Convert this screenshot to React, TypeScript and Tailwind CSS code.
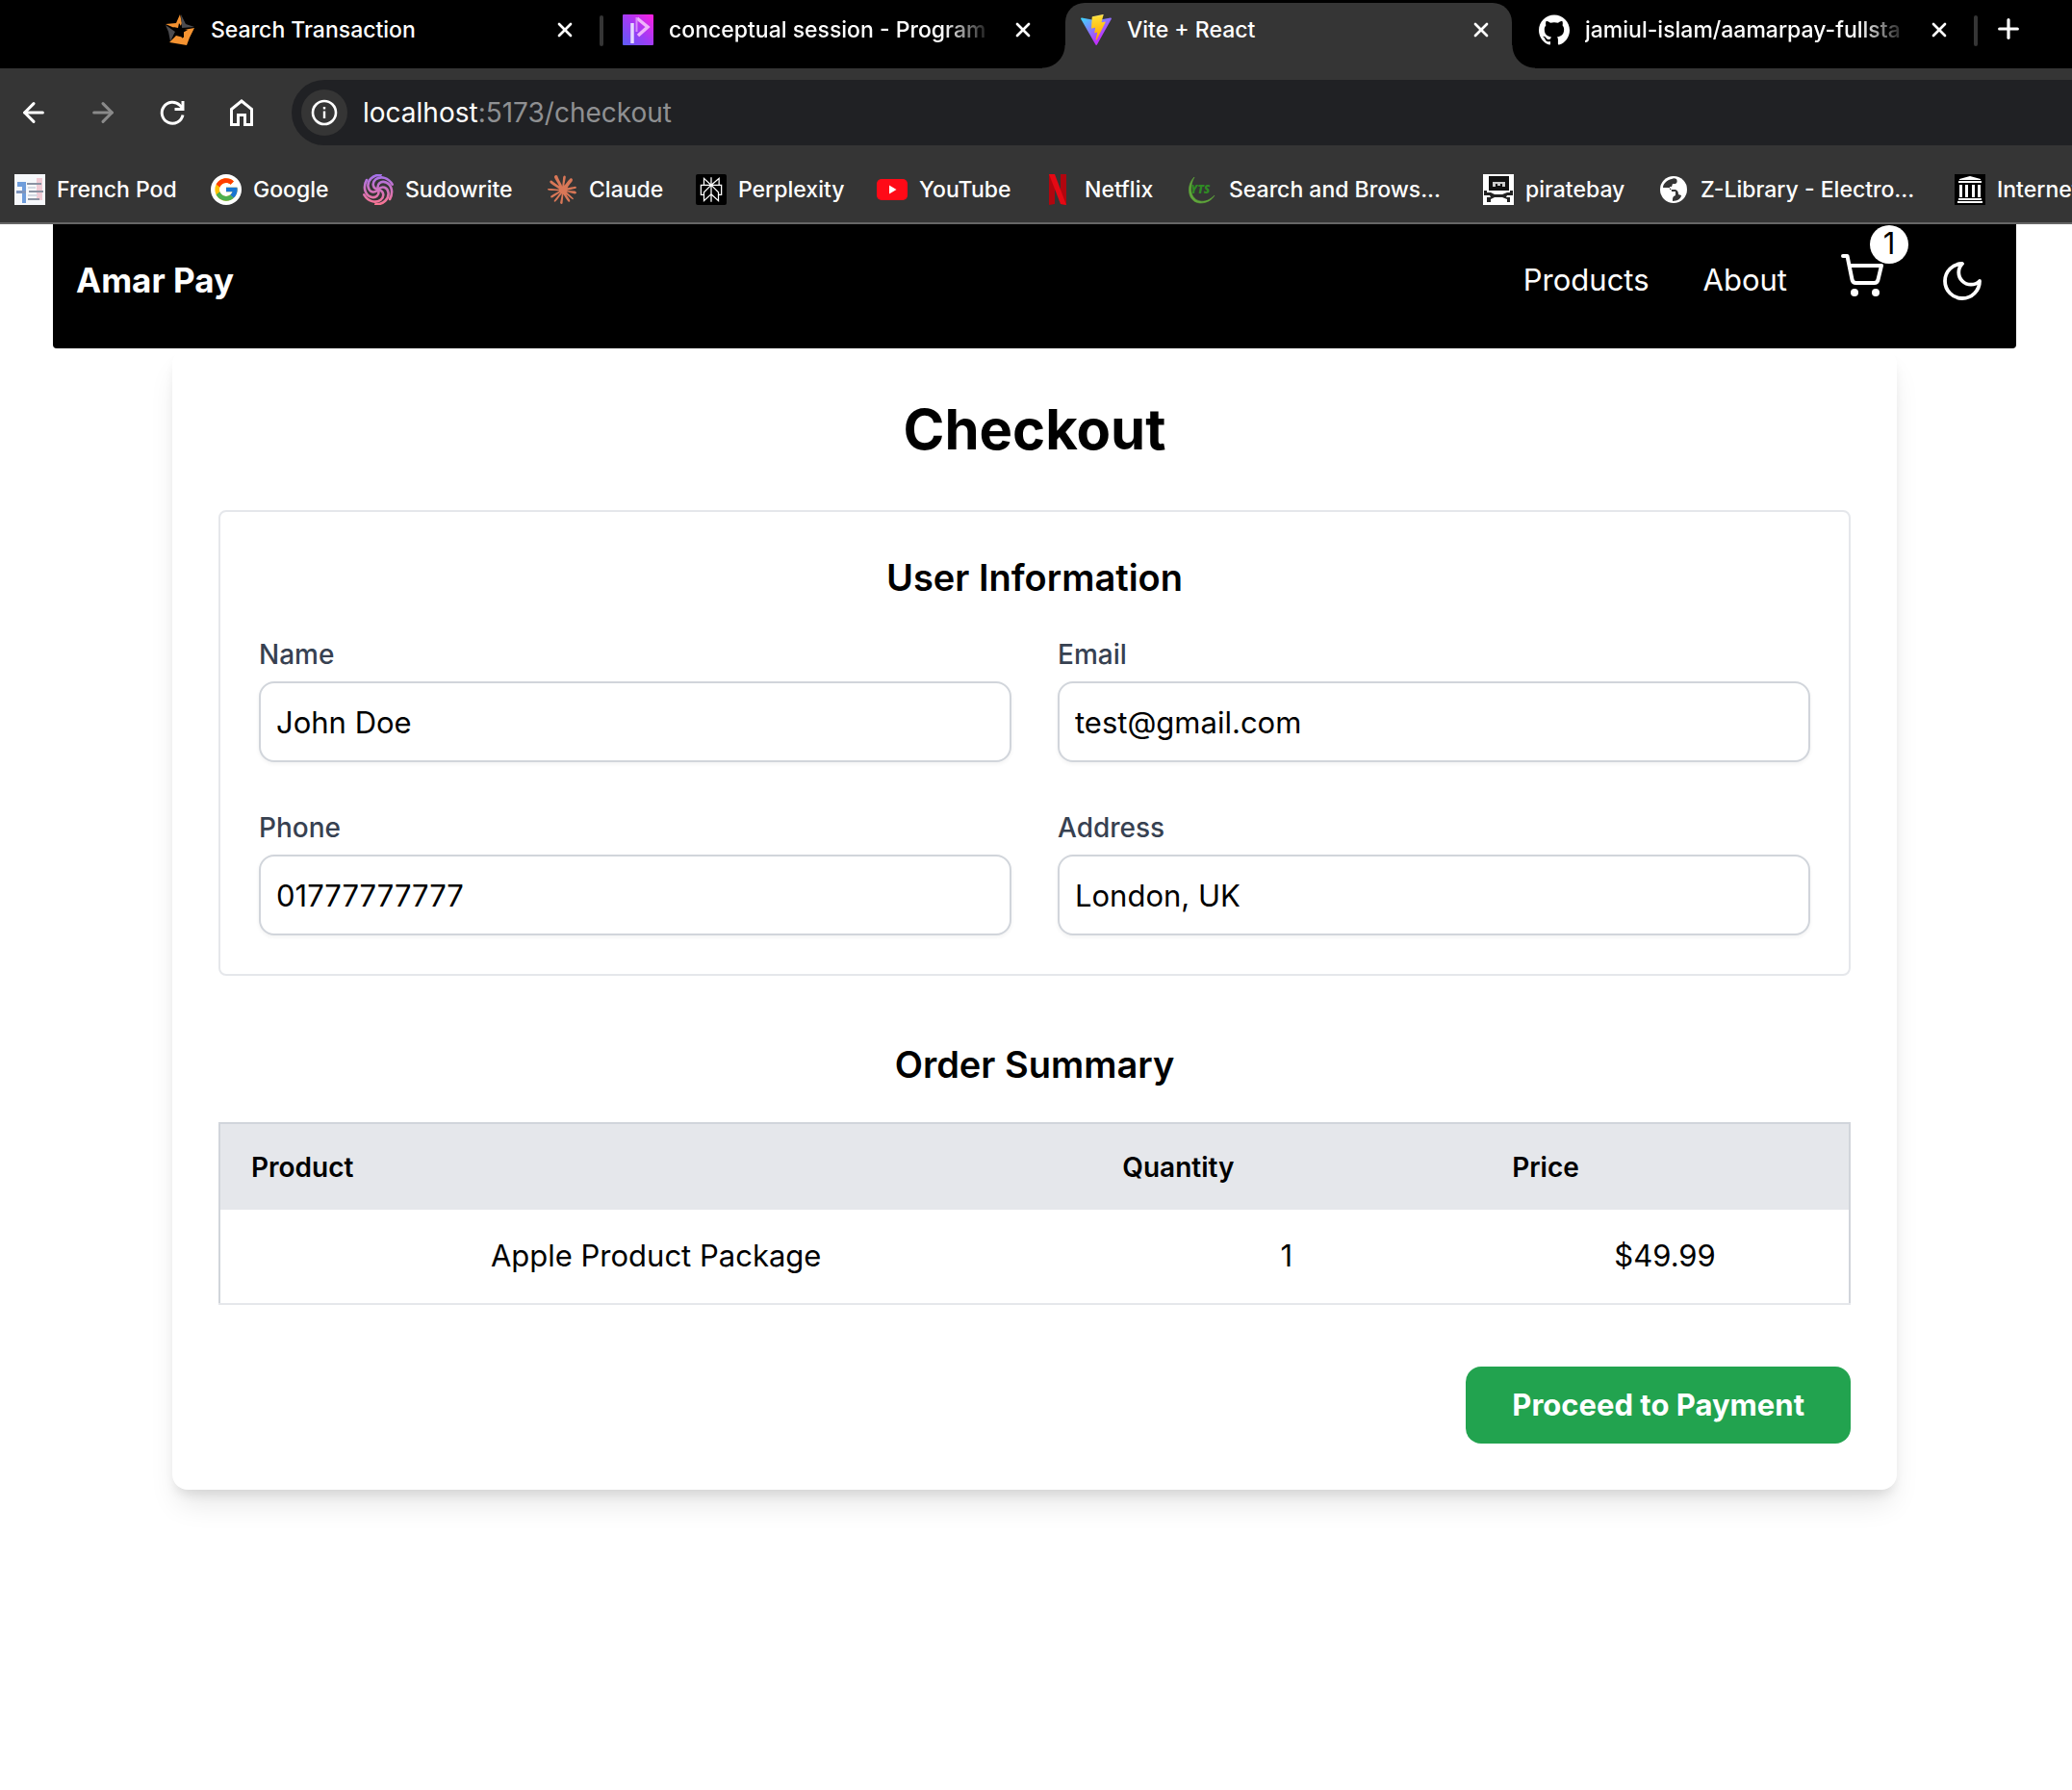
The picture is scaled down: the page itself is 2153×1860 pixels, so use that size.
import React, { useState } from "react";
import { SiPerplexity, SiGithub, SiClaude } from "react-icons/si";
import { FcGoogle } from "react-icons/fc";
import { ArrowLeft, ArrowRight, X, Plus } from "lucide-react";

type IconProps = { className?: string };

function StarIcon() {
  return (
    <svg viewBox="0 0 32 32" className="size-8">
      <path d="M16 0 L18 9 L15 16 L1 10 L12 9Z" fill="#f59331" />
      <path d="M17 0 L22 10 L31 13 L18 14Z" fill="#4b4b4f" />
      <path d="M1 11 L11 18 L6 28 L4 18Z" fill="#4b4b4f" />
      <path d="M31 14 L26 24 L23 32 L5 29 L12 22 L20 24 L20 16Z" fill="#f59331" />
      <path d="M15 9 L19 15 L24 16 L19 19 L19 25 L15 20 L9 22 L12 17 L9 13 L14 14Z" fill="#000" />
    </svg>
  );
}

function ProgrammingIcon() {
  return (
    <svg viewBox="0 0 32 32" className="size-8">
      <defs>
        <linearGradient id="ph" x1="0" y1="1" x2="1" y2="0">
          <stop offset="0" stopColor="#5b5bf8" />
          <stop offset="0.5" stopColor="#a23bf5" />
          <stop offset="1" stopColor="#ff1fe0" />
        </linearGradient>
      </defs>
      <rect width="32" height="32" rx="1" fill="url(#ph)" />
      <path d="M10 9V30" stroke="#e6d8ff" strokeWidth="3.500" />
      <path d="M15 4 L26 13 L16 22" fill="none" stroke="#efb3fb" strokeWidth="3.500" />
      <path d="M14.500 3V18" stroke="#d58cf8" strokeWidth="2" />
    </svg>
  );
}

function ViteIcon() {
  return (
    <svg viewBox="0 0 256 257" className="size-8">
      <defs>
        <linearGradient id="va" x1="-.828%" x2="57.636%" y1="7.652%" y2="78.411%">
          <stop offset="0%" stopColor="#41D1FF" />
          <stop offset="100%" stopColor="#BD34FE" />
        </linearGradient>
        <linearGradient id="vb" x1="43.376%" x2="50.316%" y1="2.242%" y2="89.03%">
          <stop offset="0%" stopColor="#FFEA83" />
          <stop offset="8.333%" stopColor="#FFDD35" />
          <stop offset="100%" stopColor="#FFA800" />
        </linearGradient>
      </defs>
      <path fill="url(#va)" d="M255.153 37.938L134.897 252.976c-2.483 4.44-8.862 4.466-11.382.048L.875 37.958c-2.746-4.814 1.371-10.646 6.827-9.67l120.385 21.517a6.537 6.537 0 0 0 2.322-.004l117.867-21.483c5.438-.991 9.574 4.796 6.877 9.62Z" />
      <path fill="url(#vb)" d="M185.432.063L96.44 17.501a3.268 3.268 0 0 0-2.634 3.014l-5.474 92.456a3.268 3.268 0 0 0 3.997 3.378l24.777-5.718c2.318-.535 4.413 1.507 3.936 3.838l-7.361 36.047c-.495 2.426 1.782 4.5 4.151 3.78l15.304-4.649c2.372-.72 4.652 1.36 4.15 3.788l-11.698 56.621c-.732 3.542 3.979 5.473 5.943 2.437l1.313-2.028l72.516-144.72c1.215-2.423-.88-5.186-3.54-4.672l-25.505 4.922c-2.396.462-4.435-1.77-3.759-4.114l16.646-57.705c.677-2.35-1.37-4.583-3.769-4.113Z" />
    </svg>
  );
}

function FrenchPodIcon() {
  return (
    <svg viewBox="0 0 32 32" className="size-8">
      <rect width="32" height="32" fill="#f6f8fb" />
      <path d="M3 8H12V30H8V13H3Z" fill="#6f9ddb" />
      <path d="M23 4H29V27H23Z" fill="#f0cbd5" />
      <path d="M2 17H12V20H2Z" fill="#7d95bd" />
      <path d="M13 9H28V11H13ZM15 17H30V19H15ZM14 25H26V27H14Z" fill="#8b93a3" />
      <path d="M14 13H22V15H14ZM14 21H24V23H14Z" fill="#d5dae3" />
    </svg>
  );
}

function GoogleIcon() {
  return (
    <span className="flex size-8 items-center justify-center rounded-full bg-white">
      <FcGoogle className="size-7" />
    </span>
  );
}

const swirlAngles = [0, 60, 120, 180, 240, 300];

function SudowriteIcon() {
  return (
    <svg viewBox="0 0 32 32" className="size-8">
      <defs>
        <linearGradient id="sw" x1="0" y1="0" x2="0" y2="1">
          <stop offset="0" stopColor="#a271ee" />
          <stop offset="1" stopColor="#fb7590" />
        </linearGradient>
        <mask id="swirl">
          <g fill="none" stroke="#fff" strokeWidth="2.600" strokeLinecap="round">
            {swirlAngles.map((a) => (
              <path key={a} d="M4 6C0 13 2 21 8 23.500C13 25.500 18 22 16 16" transform={`rotate(${a} 16 16)`} />
            ))}
          </g>
        </mask>
      </defs>
      <rect width="32" height="32" fill="url(#sw)" mask="url(#swirl)" />
    </svg>
  );
}

function ClaudeIcon() {
  return <SiClaude className="size-[30px] text-[#d97757]" />;
}

function PerplexityIcon() {
  return (
    <span className="flex size-8 items-center justify-center rounded-xs bg-black">
      <SiPerplexity className="size-[26px] text-white" />
    </span>
  );
}

function YouTubeIcon() {
  return (
    <svg viewBox="0 0 32 32" className="size-8">
      <rect y="5" width="32" height="22" rx="5" fill="#ff0a17" />
      <path d="M13 11.500V20.500L20.500 16Z" fill="#fff" />
    </svg>
  );
}

function NetflixIcon() {
  return (
    <svg viewBox="0 0 32 32" className="size-8">
      <path d="M7 0H13V31L7 32ZM19 0H25V32L19 31Z" fill="#b1060f" />
      <path d="M7 0H13L25 32L19 31Z" fill="#e50914" />
    </svg>
  );
}

function YtsIcon() {
  return (
    <svg viewBox="0 0 32 32" className="size-8">
      <path d="M8 3C-1 12 1 29 14 30C21 30 26 27 29 22C24 27 19 29 14 28C4 26 2 14 8 3Z" fill="#5fa83a" stroke="#5fa83a" strokeWidth="0.600" />
      <text x="4" y="20" fontSize="12" fontWeight="800" fontStyle="italic" fontFamily="Open Sans, sans-serif" fill="#2f8a24">YTS</text>
    </svg>
  );
}

function PirateIcon() {
  return (
    <svg viewBox="0 0 32 32" className="size-8">
      <rect width="32" height="32" fill="#fff" />
      <path d="M6 2H27V17H6Z" fill="#111" />
      <path d="M1 17H4V19H8L12 21H20L25 19H28V17H31V22H25L24 24H28V29H25V26L20 24H12L8 26V29H4V24H8L7 22H1Z" fill="#222" />
      <path d="M10 8H23V10H10ZM10 10H13V13H10ZM15 10H18V12H15ZM20 10H23V13H20Z" fill="#ccc" />
    </svg>
  );
}

function GlobeIcon() {
  return (
    <svg viewBox="0 0 32 32" className="size-8">
      <circle cx="16" cy="16" r="14" fill="#fff" />
      <path d="M14 5C9 6 5 10 5 14H10C13 14 14 16 14 18H18V22C15 23 15 25 15 28C20 28 24 25 24 22L21 21C21 18 20 17 18 16H12V13H14L15 10H18C20 9 20 7 19 5C17 4 16 4 14 5Z" fill="#353535" />
    </svg>
  );
}

function ArchiveIcon() {
  return (
    <svg viewBox="0 0 32 32" className="size-8">
      <rect width="32" height="32" fill="#000" />
      <path d="M16 2L27 5V6H5V5ZM4 7H28V9H4ZM5 11H8V24H5ZM11 11H14V24H11ZM18 11H21V24H18ZM24 11H27V24H24ZM4 25H28V27H4ZM3 28H29V30H3Z" fill="#fff" />
    </svg>
  );
}

function ReloadIcon({ className }: IconProps) {
  return (
    <svg viewBox="0 0 32 32" className={className} fill="none" stroke="currentColor" strokeWidth="3">
      <path d="M27 18.500A11 11 0 1 1 24 8.500L27 11.500" />
      <path d="M27 4V12.500H18.500" />
    </svg>
  );
}

function HomeIcon({ className }: IconProps) {
  return (
    <svg viewBox="0 0 32 32" className={className} fill="none" stroke="currentColor" strokeWidth="3">
      <path d="M5.500 28.500V12.500L16 4L26.500 12.500V28.500H19.500V18.500H12.500V28.500Z" />
    </svg>
  );
}

function InfoIcon({ className }: IconProps) {
  return (
    <svg viewBox="0 0 28 28" className={className} fill="none" stroke="currentColor">
      <circle cx="14" cy="14" r="12" strokeWidth="2.600" />
      <path d="M14 12.500V20M14 8V10.500" strokeWidth="2.400" />
    </svg>
  );
}

function CartIcon({ className }: IconProps) {
  return (
    <svg viewBox="0 0 44 44" className={className} fill="none" stroke="currentColor" strokeWidth="4" strokeLinecap="round" strokeLinejoin="round">
      <path d="M2 2H6.500L11.500 26.500Q12.200 30 15.500 30H34.500Q37.800 30 38.500 26.500L42 12H8.500" />
      <circle cx="14" cy="40" r="4" fill="currentColor" stroke="none" />
      <circle cx="36" cy="40" r="4" fill="currentColor" stroke="none" />
    </svg>
  );
}

function MoonIcon({ className }: IconProps) {
  return (
    <svg viewBox="0 0 40 40" className={className} fill="none" stroke="currentColor" strokeWidth="3.800" strokeLinejoin="round">
      <path d="M20 2A18 18 0 1 0 38 20A12.500 12.500 0 0 1 20 2Z" />
    </svg>
  );
}

type TabProps = { icon: React.ReactNode; title: string; active?: boolean; fade?: boolean; separator?: boolean };

function Tab({ icon, title, active, fade, separator }: TabProps) {
  return (
    <div className="relative flex h-[71px] w-[476px] shrink-0 px-1.5 pt-[3px]">
      {active && (
        <>
          <span className="absolute bottom-0 -left-[18px] size-6 bg-[radial-gradient(circle_at_0_0,#000_23px,#353535_24px)]" />
          <span className="absolute -right-[18px] bottom-0 size-6 bg-[radial-gradient(circle_at_100%_0,#000_23px,#353535_24px)]" />
        </>
      )}
      <div className={active ? "flex min-w-0 flex-1 rounded-t-[20px] bg-[#353535] px-4" : "flex min-w-0 flex-1 px-4"}>
        <div className="flex h-14 min-w-0 flex-1 items-center gap-4">
          <span className="shrink-0">{icon}</span>
          <span className={fade ? "min-w-0 flex-1 overflow-hidden whitespace-nowrap [mask-image:linear-gradient(to_right,#000_85%,transparent)]" : "min-w-0 flex-1 overflow-hidden whitespace-nowrap"}>
            {title}
          </span>
          <button type="button" aria-label={"Close " + title} className="flex size-8 shrink-0 items-center justify-center">
            <X className="size-6" strokeWidth={2.7} />
          </button>
        </div>
      </div>
      {separator && <span className="absolute top-4 -right-0.5 h-8 w-1 rounded-full bg-[#353535]" />}
    </div>
  );
}

const bookmarks = [
  { label: "French Pod", icon: <FrenchPodIcon />, width: "w-[204px]" },
  { label: "Google", icon: <GoogleIcon />, width: "w-[158px]" },
  { label: "Sudowrite", icon: <SudowriteIcon />, width: "w-[191px]" },
  { label: "Claude", icon: <ClaudeIcon />, width: "w-[155px]" },
  { label: "Perplexity", icon: <PerplexityIcon />, width: "w-[188px]" },
  { label: "YouTube", icon: <YouTubeIcon />, width: "w-[172px]" },
  { label: "Netflix", icon: <NetflixIcon />, width: "w-[150px]" },
  { label: "Search and Brows...", icon: <YtsIcon />, width: "w-[308px]" },
  { label: "piratebay", icon: <PirateIcon />, width: "w-[182px]" },
  { label: "Z-Library - Electro...", icon: <GlobeIcon />, width: "w-[308px]" },
  { label: "Internet", icon: <ArchiveIcon />, width: "w-[260px]" },
];

function Browser() {
  return (
    <header className="overflow-hidden bg-[#353535] text-[23px] font-medium text-white">
      <div className="flex bg-black pl-[149px]">
        <Tab icon={<StarIcon />} title="Search Transaction" separator />
        <Tab icon={<ProgrammingIcon />} title="conceptual session - Program" fade />
        <Tab icon={<ViteIcon />} title="Vite + React" active />
        <Tab icon={<SiGithub className="size-8" />} title="jamiul-islam/aamarpay-fullsta" fade separator />
        <button type="button" aria-label="New tab" className="flex h-[60px] w-[68px] shrink-0 items-center justify-center">
          <Plus className="size-8" strokeWidth={2.4} />
        </button>
      </div>
      <div className="flex h-[92px] items-center pl-[19px]">
        <div className="flex w-[284px] shrink-0 items-center gap-10">
          <button type="button" aria-label="Back"><ArrowLeft className="size-8" strokeWidth={2.3} /></button>
          <button type="button" aria-label="Forward" className="text-[#8a8a8a]"><ArrowRight className="size-8" strokeWidth={2.3} /></button>
          <button type="button" aria-label="Reload"><ReloadIcon className="size-8" /></button>
          <button type="button" aria-label="Home"><HomeIcon className="size-8" /></button>
        </div>
        <div className="flex h-[68px] flex-1 items-center gap-4 rounded-l-full bg-[#202124] pl-2.5 text-[28px] font-normal">
          <button type="button" aria-label="Site information" className="flex size-12 items-center justify-center rounded-full bg-[#353535]">
            <InfoIcon className="size-7" />
          </button>
          <span className="text-[#8f9092]"><span className="text-white">localhost</span>:5173/checkout</span>
        </div>
      </div>
      <nav aria-label="Bookmarks" className="flex h-[70px] items-center border-b-2 border-[#666] pl-[15px]">
        {bookmarks.map((b) => (
          <a key={b.label} href="#" className={"flex shrink-0 items-center gap-3 whitespace-nowrap " + b.width}>
            <span className="flex size-8 shrink-0 items-center justify-center">{b.icon}</span>
            {b.label}
          </a>
        ))}
      </nav>
    </header>
  );
}

function SiteNav() {
  return (
    <nav className="mx-[55px] flex h-[129px] items-center justify-between rounded-b bg-black pr-9 pb-3 pl-6 text-white">
      <a href="#" className="text-[35px] font-bold">Amar Pay</a>
      <div className="flex items-center text-[31px]">
        <a href="#" className="mr-14">Products</a>
        <a href="#" className="mr-14">About</a>
        <button type="button" aria-label="Cart" className="relative mr-[62px] mb-3">
          <CartIcon className="size-11" />
          <span className="absolute -top-[30px] -right-[26px] flex size-10 items-center justify-center rounded-full bg-white text-[31px] text-black">1</span>
        </button>
        <button type="button" aria-label="Dark mode"><MoonIcon className="size-10" /></button>
      </div>
    </nav>
  );
}

function Field({ id, label, initial, type }: { id: string; label: string; initial: string; type: string }) {
  const [value, setValue] = useState(initial);
  return (
    <div>
      <label htmlFor={id} className="block text-[28px] leading-10 font-medium text-[#374151]">{label}</label>
      <input
        id={id}
        type={type}
        value={value}
        onChange={(e) => setValue(e.target.value)}
        className="mt-2 block h-[84px] w-full rounded-2xl border-2 border-[#d1d5db] bg-white px-4 text-[31px] text-black shadow-[0_2px_4px_0_rgba(0,0,0,0.05)]"
      />
    </div>
  );
}

export default function App() {
  return (
    <div className="min-h-screen bg-white font-['Inter',sans-serif] text-black">
      <Browser />
      <div className="pr-[3px] pb-16">
        <SiteNav />
        <main className="mx-auto max-w-[1792px] rounded-2xl bg-white p-12 shadow-[0_20px_30px_-6px_rgba(0,0,0,0.1),0_8px_12px_-4px_rgba(0,0,0,0.1)]">
          <h1 className="text-center text-[58px] leading-[72px] font-bold">Checkout</h1>
          <section className="mt-12 rounded-lg border-2 border-[#e5e7eb] p-10">
            <h2 className="mb-8 text-center text-[38px] leading-14 font-semibold">User Information</h2>
            <div className="grid grid-cols-2 gap-12">
              <Field id="name" label="Name" initial="John Doe" type="text" />
              <Field id="email" label="Email" initial="test@gmail.com" type="email" />
              <Field id="phone" label="Phone" initial="01777777777" type="tel" />
              <Field id="address" label="Address" initial="London, UK" type="text" />
            </div>
          </section>
          <h2 className="mt-16 mb-8 text-center text-[38px] leading-14 font-semibold">Order Summary</h2>
          <table className="w-full table-fixed border-collapse border-2 border-[#d1d5db]">
            <colgroup>
              <col className="w-[53.5%]" />
              <col className="w-[23.9%]" />
              <col />
            </colgroup>
            <thead>
              <tr className="h-[90px] bg-[#e5e7eb] text-left text-[28px]">
                <th className="px-8 font-semibold">Product</th>
                <th className="px-8 font-semibold">Quantity</th>
                <th className="px-8 font-semibold">Price</th>
              </tr>
            </thead>
            <tbody>
              <tr className="h-[98px] border-b-2 border-[#e5e7eb] text-center text-[31px]">
                <td>Apple Product Package</td>
                <td>1</td>
                <td>$49.99</td>
              </tr>
            </tbody>
          </table>
          <div className="mt-16 flex justify-end">
            <button type="button" className="h-20 rounded-2xl bg-[#22a34f] px-12 text-[31px] font-bold text-white">
              Proceed to Payment
            </button>
          </div>
        </main>
      </div>
    </div>
  );
}
